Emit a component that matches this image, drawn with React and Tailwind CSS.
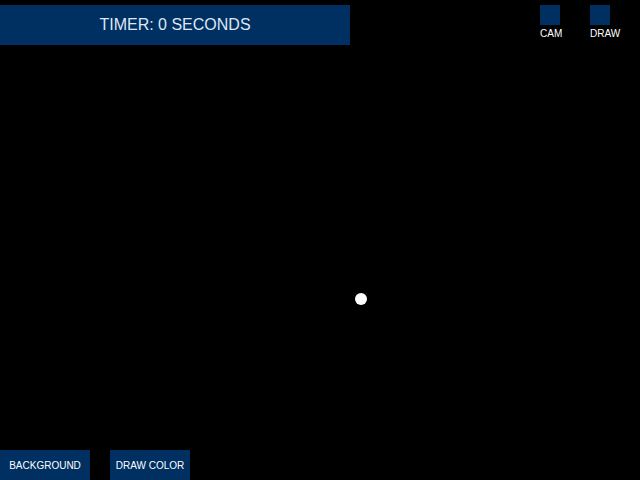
import React from 'react';

const ToggleBox = ({ label }) => (
  <div className="flex flex-col items-start w-[50px]">
    <div className="w-5 h-5 bg-[#002f62]" />
    <span className="mt-[3px] text-[10px] leading-[12px] text-white">{label}</span>
  </div>
);

const App = () => {
  return (
    <div className="relative w-[640px] h-[480px] bg-black overflow-hidden font-['Liberation_Sans',Arial,sans-serif] flex flex-col justify-between">
      <div className="flex justify-between items-start pt-[5px]">
        <div className="w-[350px] h-10 bg-[#002f62] flex items-center justify-center">
          <span className="text-[16px] text-[#dde8f5]">TIMER: 0 SECONDS</span>
        </div>
        <div className="flex">
          <ToggleBox label="CAM" />
          <ToggleBox label="DRAW" />
        </div>
      </div>

      <div className="flex gap-5">
        <button className="w-[90px] h-[30px] bg-[#002f62] text-[10px] text-white flex items-center justify-center">
          BACKGROUND
        </button>
        <button className="w-20 h-[30px] bg-[#002f62] text-[10px] text-white flex items-center justify-center">
          DRAW COLOR
        </button>
      </div>

      <div className="absolute left-[355px] top-[293px] w-3 h-3 rounded-full bg-white" />
    </div>
  );
};

export default App;
